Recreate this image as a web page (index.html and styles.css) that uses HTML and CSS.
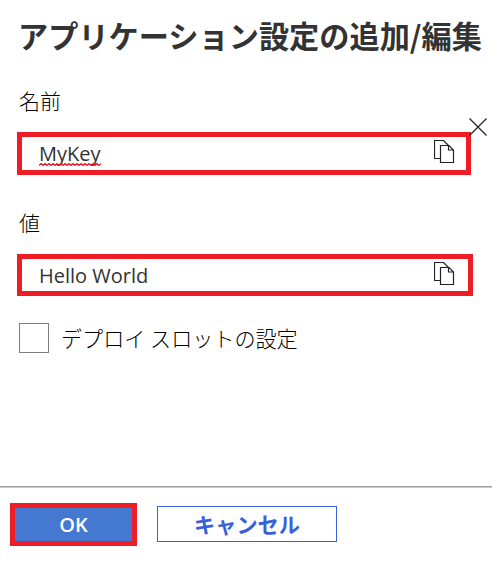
FILE: index.html
```html
<!DOCTYPE html>
<html lang="ja">
<head>
<meta charset="utf-8">
<title>アプリケーション設定の追加/編集</title>
<link rel="stylesheet" href="styles.css">
</head>
<body>
<main class="panel">
  <h1 class="title">アプリケーション設定の追加/編集</h1>
  <svg class="close" viewBox="0 0 18 18"><path d="M.5.5l17 17M17.5.5L.5 17.500"/></svg>
  <div class="label">名前</div>
  <div class="field name">
    <span class="value key">MyKey<svg class="squiggle" viewBox="0 0 62 3"><path d="M0 2.300l2-1.600 2 1.600 2-1.600 2 1.600 2-1.600 2 1.600 2-1.600 2 1.600 2-1.600 2 1.600 2-1.600 2 1.600 2-1.600 2 1.600 2-1.600 2 1.600 2-1.600 2 1.600 2-1.600 2 1.600 2-1.600 2 1.600 2-1.600 2 1.600 2-1.600 2 1.600 2-1.600 2 1.600 2-1.600 2 1.600 2-1.600"/></svg></span>
    <svg class="copy" viewBox="0 0 21 24"><path d="M6 18.500H.5V.5h9l5 5M6.500 5.500h8.500l4.500 4.500v12.500h-13zM14.500 5.500v4.500h5"/></svg>
  </div>
  <div class="label second">値</div>
  <div class="field content">
    <span class="value">Hello World</span>
    <svg class="copy" viewBox="0 0 21 24"><path d="M6 18.500H.5V.5h9l5 5M6.500 5.500h8.500l4.500 4.500v12.500h-13zM14.500 5.500v4.500h5"/></svg>
  </div>
  <div class="option"><span class="checkbox"></span><span class="option-text">デプロイ スロットの設定</span></div>
  <footer class="actions">
    <div class="button ok"><span>OK</span></div>
    <div class="button cancel"><span>キャンセル</span></div>
  </footer>
</main>
</body>
</html>
```
FILE: styles.css
```css
* { box-sizing: border-box; }
body {
  margin: 0;
  background: #fff;
  color: #222;
  font-family: "Open Sans", "Noto Sans CJK JP", sans-serif;
}
.panel {
  position: relative;
  display: flex;
  flex-direction: column;
  height: 563px;
  overflow: hidden;
}
.title {
  margin: 14px 0 0 18px;
  height: 42px;
  line-height: 42px;
  font-family: "Noto Sans CJK JP", sans-serif;
  font-size: 30.200px;
  font-weight: 700;
  color: #333;
  white-space: nowrap;
}
.close {
  position: absolute;
  left: 469px;
  top: 118px;
  width: 18px;
  height: 18px;
}
svg { fill: none; stroke: #222; stroke-width: 1.2; }
.label {
  margin: 29px 0 0 19px;
  height: 30px;
  line-height: 30px;
  font-family: "Noto Sans CJK JP", sans-serif;
  font-size: 21px;
  font-weight: 300;
  color: #000;
}
.field {
  display: flex;
  align-items: center;
  justify-content: space-between;
  margin-left: 17px;
  padding-left: 17px;
  border: 5px solid #ee1c25;
}
.name { width: 454px; height: 43px; margin-top: 17px; padding-right: 11px; }
.label.second { margin-top: 32px; }
.content { width: 456px; height: 42px; margin-top: 17px; padding-right: 13px; }
.value {
  position: relative;
  line-height: 30px;
  font-size: 20px;
  color: #333;
}
.content .value { top: 1px; }
.squiggle {
  position: absolute;
  left: 0;
  top: 24px;
  width: 62px;
  height: 3px;
  stroke: #e81123;
  stroke-width: 1.400;
}
.copy { width: 21px; height: 24px; margin-top: -4px; }
.content .copy { margin-top: -2px; }
.option {
  display: flex;
  align-items: center;
  margin: 27px 0 0 19px;
  height: 30px;
}
.checkbox {
  width: 30px;
  height: 30px;
  border: 1px solid #808080;
}
.option-text {
  margin: -1px 0 0 12px;
  line-height: 30px;
  font-family: "Noto Sans CJK JP", sans-serif;
  font-size: 21.100px;
  font-weight: 300;
  color: #000;
  white-space: nowrap;
}
.actions {
  display: flex;
  align-items: flex-start;
  margin-top: auto;
  height: 77px;
  padding: 16px 0 0 10px;
  border-top: 1px solid #a0a0a0;
  box-shadow: inset 0 1px #ccc;
}
.button {
  display: flex;
  align-items: center;
  justify-content: center;
}
.ok {
  width: 127px;
  height: 43px;
  border: 5px solid #ee1c25;
  background: #4478d1;
  color: #fff;
  font-size: 20px;
  font-weight: 600;
}
.cancel {
  width: 180px;
  height: 36px;
  margin: 3px 0 0 20px;
  padding-bottom: 2px;
  border: 1px solid #3860d8;
  color: #3860d8;
  font-family: "Noto Sans CJK JP", sans-serif;
  font-size: 21.200px;
  font-weight: 700;
}
```
